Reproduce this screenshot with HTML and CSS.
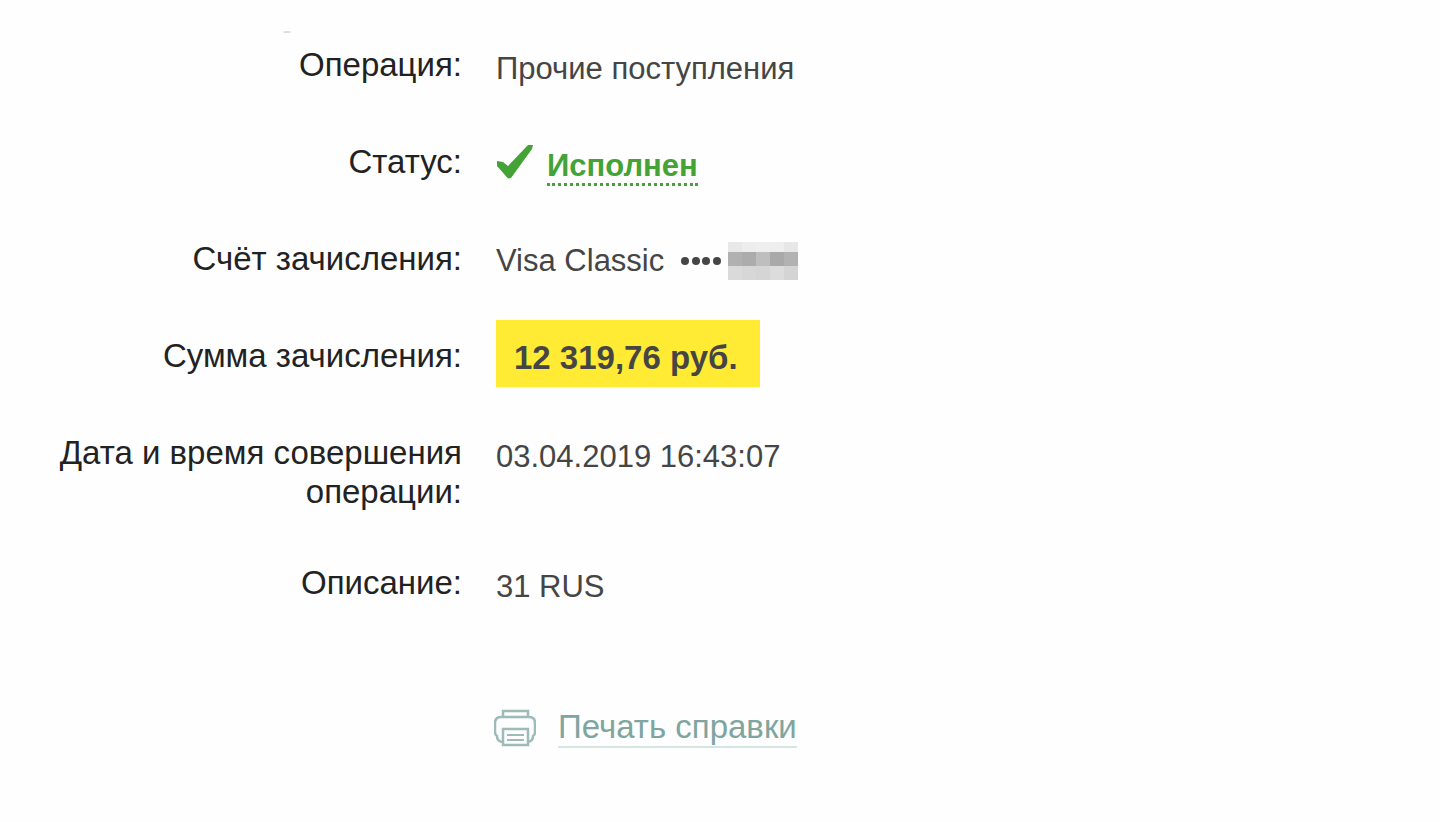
FILE: index.html
```html
<!DOCTYPE html>
<html lang="ru">
<head>
<meta charset="utf-8">
<meta name="viewport" content="width=device-width, initial-scale=1">
<title>Операция</title>
<link rel="stylesheet" href="styles.css">
</head>
<body>
<main class="receipt">
  <div class="speck"></div>
  <dl class="details">
    <div class="row"><dt class="label">Операция:</dt><dd class="value">Прочие поступления</dd></div>
    <div class="row">
      <dt class="label">Статус:</dt>
      <dd class="value status">
        <svg class="check" viewBox="0 0 38 36" aria-hidden="true"><path d="M1 17 7 18 12 22 32 1 37 1 36 5 15 34 12 34.500 9 31 1 22Z" fill="#43a336"/></svg>
        <a class="status-link" href="#">Исполнен</a>
      </dd>
    </div>
    <div class="row">
      <dt class="label">Счёт зачисления:</dt>
      <dd class="value account"><span>Visa Classic</span>
        <svg class="dots" viewBox="0 0 42 10" aria-hidden="true"><g fill="#454545"><circle cx="5" cy="5" r="4"/><circle cx="16" cy="5" r="4"/><circle cx="26" cy="5" r="4"/><circle cx="37" cy="5" r="4"/></g></svg>
        <svg class="mask" viewBox="0 0 70 38" shape-rendering="crispEdges" aria-hidden="true">
          <path fill="#e8e8e8" d="M0 0h14v10H0z"/><path fill="#ededed" d="M14 0h14v10H14z"/><path fill="#efefef" d="M28 0h14v10H28z"/><path fill="#eeeeee" d="M42 0h14v10H42z"/><path fill="#e7e7e7" d="M56 0h14v10H56z"/>
          <path fill="#b1b1b1" d="M0 10h14v14H0z"/><path fill="#acacac" d="M14 10h14v14H14z"/><path fill="#bebebe" d="M28 10h14v14H28z"/><path fill="#a9a9a9" d="M42 10h14v14H42z"/><path fill="#b2b2b2" d="M56 10h14v14H56z"/>
          <path fill="#dadada" d="M0 24h14v14H0z"/><path fill="#d7d7d7" d="M14 24h14v14H14z"/><path fill="#d5d5d5" d="M28 24h14v14H28z"/><path fill="#dcdcdc" d="M42 24h14v14H42z"/><path fill="#d4d4d4" d="M56 24h14v14H56z"/>
        </svg>
      </dd>
    </div>
    <div class="row"><dt class="label">Сумма зачисления:</dt><dd class="value sum"><strong class="amount">12 319,76 руб.</strong></dd></div>
    <div class="row"><dt class="label">Дата и время совершения операции:</dt><dd class="value">03.04.2019 16:43:07</dd></div>
    <div class="row"><dt class="label">Описание:</dt><dd class="value">31 RUS</dd></div>
  </dl>
  <a class="print" href="#">
    <svg class="printer" viewBox="0 0 42 38" fill="none" stroke="#9dbbb7" stroke-width="2.500" aria-hidden="true"><path d="M9 8V2h25v6M8 33q-5-1-5-6-2-1-2-4v-9q0-6 6-6h28q6 0 6 6v9q0 3-2 4 0 5-5 6"/><path d="M9 20h25v16H9z"/><path d="M13 26h17M13 31h17" stroke-width="2"/></svg>
    <span class="print-text">Печать справки</span>
  </a>
</main>
</body>
</html>
```
FILE: styles.css
```css
body {
  margin: 0;
  background: #fefefe;
  font-family: "Liberation Sans", Arial, sans-serif;
}

.receipt {
  padding: 31px 32px 40px;
}

.speck {
  width: 8px;
  height: 2px;
  margin-left: 251px;
  border-radius: 50%;
  background: #dddddd;
}

.details {
  display: flex;
  flex-direction: column;
  gap: 52px;
  margin: 12px 0 0;
}

.row {
  display: grid;
  grid-template-columns: 430px 1fr;
  column-gap: 34px;
  min-height: 45px;
}

.label {
  color: #222222;
  font-size: 33px;
  line-height: 39px;
  text-align: right;
}

.value {
  height: 39px;
  margin: 0;
  padding-top: 4px;
  color: #454545;
  font-size: 31px;
  line-height: 39px;
}

.status,
.account,
.sum {
  display: flex;
  align-items: center;
}

.check {
  width: 38px;
  height: 36px;
  margin: -8px 13px 0 0;
}

.status-link {
  margin-top: 2px;
  padding-top: 2px;
  border-bottom: 3px dotted #43a336;
  color: #43a336;
  font-weight: bold;
  line-height: 34px;
  text-decoration: none;
}

.account {
  padding-top: 2px;
}

.dots {
  width: 42px;
  height: 10px;
  margin: 0 6px 0 16px;
}

.mask {
  width: 70px;
  height: 38px;
}

.amount {
  margin: -34px 0 -22px;
  padding: 18px 22px 10px 18px;
  background: #ffeb33;
  font-size: 33px;
}

.print {
  display: inline-flex;
  align-items: center;
  margin: 100px 0 0 462px;
  color: #7fa5a0;
  font-size: 33px;
  line-height: 38px;
  text-decoration: none;
}

.printer {
  width: 42px;
  height: 38px;
  margin-right: 22px;
}

.print-text {
  border-bottom: 2px solid #d5e5e2;
}
```
